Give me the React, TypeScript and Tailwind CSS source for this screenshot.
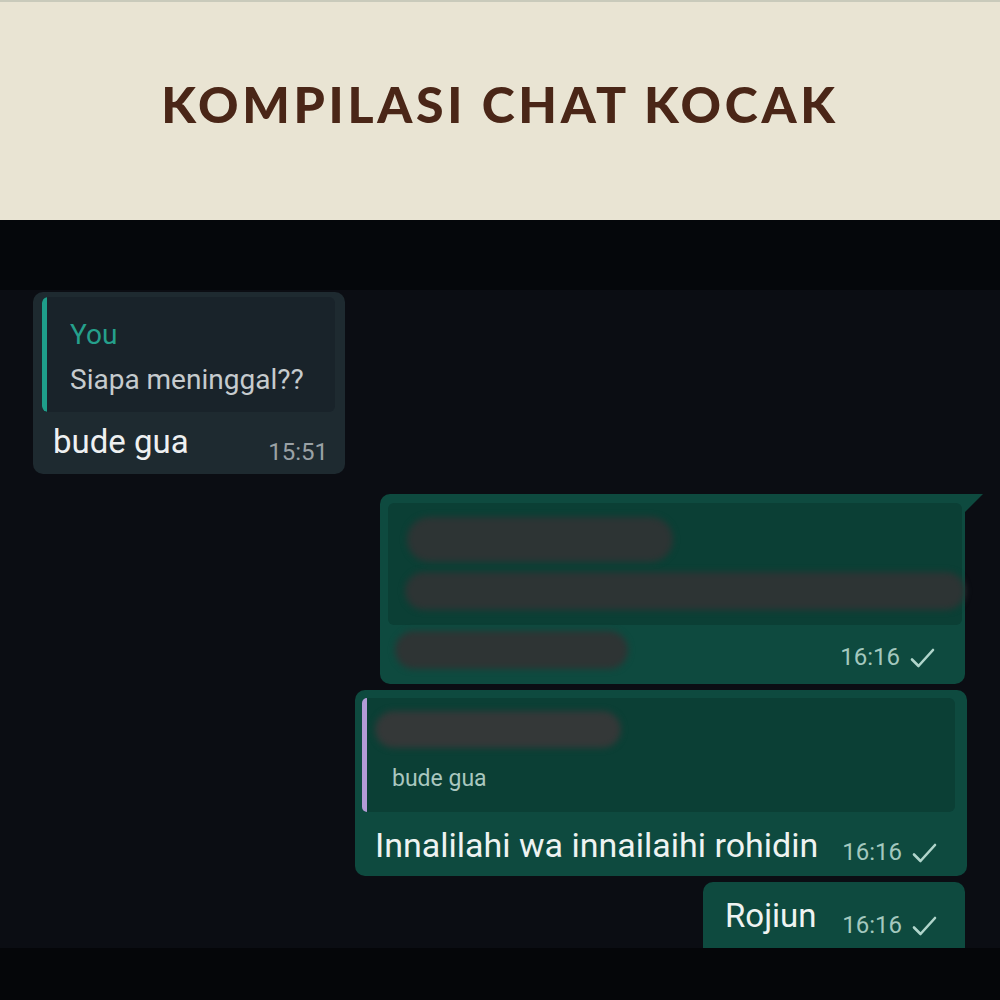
import React from "react";

function Tick()
{
    return (
        <svg width="25" height="21" viewBox="0 0 25 21" className="ml-[10px] mb-[2px]">
            <polyline points="2,11.5 8.5,18 23,2" fill="none" stroke="#b0d5cb" strokeWidth="2.6" strokeLinecap="round" strokeLinejoin="round" />
        </svg>
    );
}

function Time(props : {text : string})
{
    return (
        <div className="flex items-end text-[24px] leading-[28px] text-[#a3c8be]">
            <span>{props.text}</span>
            <Tick />
        </div>
    );
}

function Pill(props : {className : string})
{
    return <div className={"rounded-full blur-[3px] " + props.className}></div>;
}

export default function App()
{
    let roboto = { fontFamily: "Roboto, 'Noto Sans', sans-serif" };

    let view = (
    <div className="w-[1000px] h-[1000px] overflow-hidden flex flex-col bg-[#0a0c12]" style={roboto}>
        <header className="h-[220px] shrink-0 bg-[#e9e4d3] border-t-2 border-[#c9cabb] flex items-center justify-center">
            <h1 className="text-[50px] leading-none font-black tracking-[3.7px] text-[#4a2617] mb-[14px]"
                style={{ fontFamily: "Lato, 'Open Sans', sans-serif" }}>
                KOMPILASI CHAT KOCAK
            </h1>
        </header>

        <div className="h-[70px] shrink-0 bg-[#05070b]"></div>

        <main className="h-[658px] shrink-0 overflow-hidden flex flex-col pt-[2px] bg-[#0b0d13]">
            {/* incoming */}
            <div className="shrink-0 ml-[33px] w-[312px] h-[182px] rounded-[10px] bg-[#1e2a30] pt-[5px] pl-[9px] pr-[10px] flex flex-col">
                <div className="h-[115px] rounded-[6px] bg-[#19232a] flex overflow-hidden">
                    <div className="w-[5px] bg-[#1e9e8a] rounded-l-[6px]"></div>
                    <div className="pl-[23px] pt-[22px]">
                        <p className="text-[28px] leading-[32px] text-[#25a08c]">You</p>
                        <p className="text-[28px] leading-[32px] text-[#c6cbce] mt-[13px]">Siapa meninggal??</p>
                    </div>
                </div>
                <div className="flex items-end justify-between pl-[11px] pr-[7px] mt-[12px]">
                    <span className="text-[33px] leading-[36px] text-[#eef0f1]">bude gua</span>
                    <span className="text-[24px] leading-[28px] text-[#9aa1a5] mb-[-6px]">15:51</span>
                </div>
            </div>

            {/* outgoing 1 with tail */}
            <div className="shrink-0 relative self-end mr-[35px] mt-[20px] w-[585px] h-[190px] rounded-[10px] rounded-tr-none bg-[#0e4a3f] pt-[9px] pl-[8px] pr-[3px] flex flex-col">
                <svg width="22" height="22" viewBox="0 0 22 22" className="absolute top-0 right-[-20px]">
                    <path d="M0 0 L20 0 L0 20 Z" fill="#0e4a3f" />
                </svg>
                <div className="h-[122px] rounded-[6px] bg-[#0b3f35] flex">
                    <div className="w-[5px] bg-[#b8a0dc] rounded-l-[6px]"></div>
                    <div className="flex-1 pt-[14px] pl-[19px] flex flex-col gap-[10px]">
                        <Pill className="w-[266px] h-[45px] bg-[#2d3434]" />
                        <Pill className="w-[560px] h-[38px] bg-[#2d3434] ml-[-2px]" />
                    </div>
                </div>
                <div className="flex items-center justify-between pl-[7px] pr-[27px] mt-[4px]">
                    <Pill className="w-[233px] h-[38px] bg-[#2e3434]" />
                    <div className="mt-[14px]"><Time text="16:16" /></div>
                </div>
            </div>

            {/* outgoing 2 */}
            <div className="shrink-0 self-end mr-[33px] mt-[6px] w-[612px] h-[186px] rounded-[10px] bg-[#0e4a3f] pt-[8px] pl-[7px] pr-[12px] flex flex-col">
                <div className="h-[114px] rounded-[6px] bg-[#0b3f35] flex">
                    <div className="w-[5px] bg-[#b39bd6] rounded-l-[6px]"></div>
                    <div className="flex-1 pt-[13px] pl-[8px] flex flex-col">
                        <Pill className="w-[246px] h-[37px] bg-[#343838]" />
                        <p className="text-[23px] leading-[28px] text-[#a9c7bf] ml-[17px] mt-[17px]">bude gua</p>
                    </div>
                </div>
                <div className="flex items-end justify-between pl-[13px] pr-[18px] mt-[14px]">
                    <span className="text-[34px] leading-[38px] text-[#eef3f1]">Innalilahi wa innailaihi rohidin</span>
                    <div className="mb-[-2px]"><Time text="16:16" /></div>
                </div>
            </div>

            {/* outgoing 3 */}
            <div className="shrink-0 self-end mr-[35px] mt-[6px] w-[262px] h-[80px] rounded-[10px] bg-[#0e4a3f] pt-[15px] pl-[22px] pr-[28px] flex items-start justify-between">
                <span className="text-[33px] leading-[38px] text-[#eef3f1]">Rojiun</span>
                <div className="mt-[14px]"><Time text="16:16" /></div>
            </div>
        </main>

        <div className="flex-1 bg-[#050609]"></div>
    </div>
    );

    return view;
}
